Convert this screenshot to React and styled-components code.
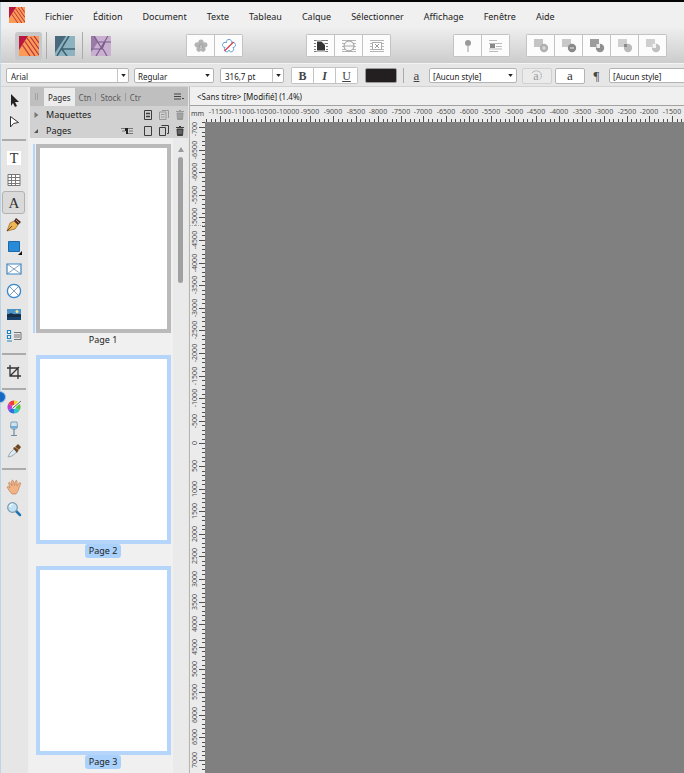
import React, { useLayoutEffect, useRef, useState } from 'react';
import styled, { createGlobalStyle } from 'styled-components';

const Global = createGlobalStyle`
  * { box-sizing: border-box; }
  html, body { margin: 0; }
  body, button, input, select {
    font-family: "Noto Sans", "Open Sans", sans-serif;
    font-size: 9px;
    color: #222;
  }
  button { padding: 0; border: 0; background: none; }
  svg { display: block; flex: none; }
`;

const Window = styled.div`
  height: 100vh;
  display: flex;
  flex-direction: column;
  overflow: hidden;
  background: #e6e6e6;
  border-top: 2px solid #050505;
`;

const MenuBar = styled.nav`
  height: 26px;
  flex: none;
  display: flex;
  align-items: center;
  gap: 20px;
  padding: 0 8px;
  background: #f0f0f0;
  border-left: 1px solid #bdd3e6;
`;

const MenuItem = styled.button`
  line-height: 16px;
  padding-top: 3px;
  white-space: nowrap;
`;

const Toolbar = styled.div`
  height: 35px;
  flex: none;
  display: flex;
  align-items: center;
  background: linear-gradient(#eeeeee, #cccccc);
  border-left: 1px solid #bdd3e6;
  padding-left: 14px;
`;

const Persona = styled.button`
  width: 27px;
  height: 28px;
  display: grid;
  place-items: center;
  border-radius: 3px;
  background: ${(p) => (p.$active ? '#c6c8c9' : 'transparent')};
`;

const Divider = styled.span`
  width: 1px;
  height: ${(p) => p.$height || 27}px;
  flex: none;
  margin: 0 4px;
  background: #aaa;
`;

const ButtonGroup = styled.div`
  display: flex;
  flex: none;
  gap: 1px;
  padding: 1px;
  background: #c3c3c3;
  border-radius: 2px;
  margin-left: ${(p) => p.$before}px;
`;

const GroupButton = styled.button`
  width: 27px;
  height: 21px;
  display: grid;
  place-items: center;
  background: #fcfcfc;
`;

const ContextBar = styled.div`
  height: 24px;
  flex: none;
  display: flex;
  align-items: center;
  padding: 1px 0 0 5px;
  background: #e6e6e6;
  border-top: 1px solid #f4f4f4;
  border-left: 1px solid #bdd3e6;
  border-bottom: 1px solid #d2d2d2;
`;

const Field = styled.span`
  width: ${(p) => p.$width}px;
  height: 15px;
  flex: none;
  display: flex;
  align-items: center;
  margin-right: ${(p) => p.$after}px;
  background: #fff;
  border: 1px solid #b4b4b4;
  border-radius: 2px;
`;

const FieldInput = styled.input`
  flex: 1;
  min-width: 0;
  height: 13px;
  padding: 1px 4px 0;
  border: 0;
  background: none;
  font-size: 8px;
  outline: none;
`;

const FieldSelect = styled.select`
  flex: 1;
  min-width: 0;
  height: 13px;
  padding: 1px 3px 0;
  border: 0;
  appearance: none;
  background: none;
  font-size: 8px;
`;

const DropButton = styled.button`
  width: 11px;
  height: 13px;
  display: grid;
  place-items: center;
  border-left: 1px solid #c4c4c4;
`;

const ArrowSlot = styled.span`
  width: 8px;
  pointer-events: none;
`;

const TextToggle = styled.button`
  width: 21px;
  height: 15px;
  background: #fff;
  font: ${(p) => p.$font} 12px/14px "Liberation Serif", serif;
  color: #444;
  text-decoration: ${(p) => (p.$underline ? 'underline' : 'none')};
`;

const ColorWell = styled.button`
  width: 32px;
  height: 15px;
  flex: none;
  margin: 0 2px 0 7px;
  background: #231f20;
  border: 1px solid #999;
  border-radius: 2px;
`;

const StyleGlyph = styled.span`
  width: 17px;
  flex: none;
  margin-right: 4px;
  text-align: center;
  font: 13px/14px "Liberation Serif", serif;
  color: #444;
  text-decoration: ${(p) => (p.$underline ? 'underline' : 'none')};
`;

const StyleButton = styled.button`
  width: 30px;
  height: 16px;
  flex: none;
  display: grid;
  place-items: center;
  margin-right: 3px;
  border: 1px solid ${(p) => (p.$off ? '#d0d0d0' : '#b4b4b4')};
  border-radius: 2px;
  background: ${(p) => (p.$off ? '#ebebeb' : '#fff')};
  color: #333;
  font: 13px/13px "Liberation Serif", serif;
`;

const Workspace = styled.div`
  flex: 1;
  min-height: 0;
  display: flex;
`;

const Tools = styled.div`
  width: 30px;
  flex: none;
  position: relative;
  display: flex;
  flex-direction: column;
  align-items: center;
  padding: 2px 3px 0 1px;
  border-left: 1px solid #bdd3e6;
  border-right: 2px solid #efefef;
`;

const ToolGroup = styled.div`
  height: ${(p) => p.$height}px;
  flex: none;
  display: grid;
  grid-auto-rows: 1fr;
`;

const Tool = styled.button`
  width: 23px;
  min-height: 0;
  display: grid;
  place-items: center;
  border-radius: 3px;
  border: 1px solid ${(p) => (p.$active ? '#b2b2b2' : 'transparent')};
  background: ${(p) => (p.$active ? '#dadada' : 'transparent')};
`;

const ToolRule = styled.hr`
  width: 24px;
  height: 2px;
  flex: none;
  margin: 6px 0;
  border: 0;
  background: #ababab;
`;

const Bubble = styled.span`
  position: absolute;
  left: -7px;
  top: 304px;
  width: 12px;
  height: 12px;
  border-radius: 50%;
  border: 1px solid #9fc3e8;
  background: #1768c4;
`;

const Panel = styled.aside`
  width: 158px;
  flex: none;
  display: flex;
  flex-direction: column;
  background: #f0f0f0;
`;

const Tabs = styled.div`
  height: 19px;
  flex: none;
  display: flex;
  align-items: center;
  background: #bfbfbf;
  padding-right: 4px;
`;

const Grip = styled.span`
  width: 3px;
  height: 7px;
  margin: 0 6px 0 5px;
  border: solid #a3a3a3;
  border-width: 0 1px;
`;

const Tab = styled.button`
  height: 18px;
  align-self: flex-end;
  padding: 0 4px;
  font-size: 8px;
  white-space: nowrap;
  color: ${(p) => (p.$active ? '#222' : '#5c5c5c')};
  background: ${(p) => (p.$active ? '#ececec' : 'transparent')};
`;

const TabSplit = styled.span`
  width: 1px;
  height: 8px;
  background: #9b9b9b;
`;

const TabGap = styled.span`
  flex: 1;
`;

const Section = styled.div`
  height: 16px;
  flex: none;
  display: flex;
  align-items: center;
  padding: 1px 3px 0;
  background: #d1d1d1;
`;

const SectionTitle = styled.button`
  flex: 1;
  display: flex;
  align-items: center;
  gap: 7px;
  line-height: 15px;
`;

const IconButton = styled.button`
  width: 16px;
  height: 15px;
  display: grid;
  place-items: center;
  margin-right: ${(p) => p.$after || 0}px;
  color: ${(p) => (p.$off ? '#999' : '#3c3c3c')};
  &:last-child { width: 10px; margin-left: 3px; }
`;

const PageScroll = styled.div`
  flex: 1;
  min-height: 0;
  display: flex;
`;

const PageList = styled.div`
  flex: 1;
  padding: 6px 0 0 3px;
  overflow: hidden;
`;

const PageItem = styled.div`
  height: 211px;
  display: flex;
  flex-direction: column;
  align-items: center;
`;

const Spread = styled.div`
  width: 100%;
  padding-left: 1px;
  border-left: 2px solid ${(p) => (p.$marked ? '#b5d5fa' : 'transparent')};
`;

const Sheet = styled.button`
  display: block;
  width: 135px;
  height: 189px;
  background: #fff;
  border: 4px solid ${(p) => (p.$selected ? '#b5d5fa' : '#bababa')};
`;

const PageName = styled.span`
  padding: 0 4px;
  border-radius: 3px;
  line-height: 14px;
  background: ${(p) => (p.$selected ? '#a9d1fb' : 'transparent')};
`;

const ScrollLane = styled.div`
  width: 15px;
  flex: none;
  display: flex;
  flex-direction: column;
  align-items: center;
  gap: 5px;
  padding-top: 9px;
  background: #eaeaea;
`;

const Thumb = styled.div`
  width: 5px;
  height: 126px;
  border-radius: 3px;
  background: #a0a0a0;
`;

const DocumentArea = styled.main`
  flex: 1;
  min-width: 0;
  display: flex;
  flex-direction: column;
  margin-left: 1px;
  border-left: 1px solid #b5b5b5;
`;

const DocumentTab = styled.div`
  height: 19px;
  flex: none;
  padding: 2px 7px 0;
  font-size: 8px;
  line-height: 16px;
  background: #f0f0f0;
  border-bottom: 1px solid #a2a2a2;
  white-space: nowrap;
`;

const CanvasGrid = styled.div`
  flex: 1;
  min-height: 0;
  display: grid;
  grid-template-columns: 15px 1fr;
  grid-template-rows: 16px 1fr;
  background: #ebebeb;
`;

const Unit = styled.span`
  padding-left: 1px;
  font-size: 7px;
  line-height: 15px;
  color: #444;
`;

const Ruler = styled.svg`
  width: 100%;
  height: 100%;
  min-width: 0;
  min-height: 0;
  overflow: hidden;
  font-size: 7px;
  fill: #505050;
`;

const Canvas = styled.div`
  background: #808080;
`;

const Caret = () => (
  <svg width="5" height="3" viewBox="0 0 6 4"><path d="M0 0h6L3 4z" fill="#222" /></svg>
);

const PublisherLogo = ({ size }) => (
  <svg width={size} height={size} viewBox="0 0 20 20">
    <rect width="20" height="20" fill="#fb9a55" />
    <path d="M0 0h9L0 14z" fill="#b9173f" />
    <path d="M3.500 9l7.500 11M6 5.500L16 20M8 2l12 17M11.500 1L20 13M15 0l5 7" stroke="#b8323f" strokeWidth="1.200" fill="none" />
  </svg>
);
const DesignerLogo = () => (
  <svg width="20" height="20" viewBox="0 0 20 20">
    <rect width="20" height="20" fill="#8cb3bf" />
    <path d="M0 0h11L0 17z" fill="#48687b" />
    <path d="M14 0L2 20M6 12l6 8M6 13h14M10 6l-3 6" stroke="#3f6273" strokeWidth="1.5" fill="none" />
  </svg>
);
const PhotoLogo = () => (
  <svg width="20" height="20" viewBox="0 0 20 20">
    <rect width="20" height="20" fill="#c9afd0" />
    <path d="M0 0h4l3 6-6 9-1 1z" fill="#9a7ba7" />
    <path d="M3 0l8 13M17 0L5 20M0 13h12M7 6h13M12 13l4 7M14 6l-3 7" stroke="#7d5d8a" strokeWidth="1.2" fill="none" />
  </svg>
);

const flower = 'M8 1.500C10 1.500 10.900 3 10.600 4.600C12.200 3.900 14.100 4.700 14.500 6.500C14.800 8.100 13.600 9.300 12 9.500C13 10.800 12.700 12.700 11.300 13.500C9.900 14.300 8.500 13.600 8 12.200C7.500 13.600 6.100 14.300 4.700 13.500C3.300 12.700 3 10.800 4 9.500C2.400 9.300 1.200 8.100 1.500 6.500C1.900 4.700 3.800 3.900 5.400 4.600C5.100 3 6 1.500 8 1.500z';
const FlowerIcon = ({ outline }) => (
  <svg width="16" height="16" viewBox="0 0 16 16">
    {outline ? (
      <>
        <path d={flower} fill="#fff" stroke="#5b9bd0" strokeWidth="1" />
        <path d="M3.500 13L12.500 4" stroke="#d9404a" strokeWidth="1.200" />
      </>
    ) : (
      <>
        <path d={flower} fill="#b3b3b3" />
        <circle cx="8" cy="8" r="2" fill="#a0a0a0" />
        <path d="M8 7v4" stroke="#ddd" strokeWidth="1" />
      </>
    )}
  </svg>
);
const WrapIcon = ({ kind }) => (
  <svg width="16" height="14" viewBox="0 0 16 14">
    <path d="M1 1.500h14M1 4.500h14M1 7.500h14M1 10.500h14M1 12.500h14" stroke={kind === 'tight' ? '#777' : '#b5b5b5'} strokeWidth="1" />
    {kind === 'tight' && <path d="M3.500 2h5l4 4v6h-9z" fill="#333" stroke="#fff" />}
    {kind === 'round' && <><circle cx="8" cy="7" r="5" fill="#f8f8f8" stroke="#999" /><path d="M3 7h10" stroke="#aaa" /></>}
    {kind === 'box' && <><path d="M3.500 3.500h9v7h-9z" fill="#fff" stroke="#aaa" /><path d="M6 5l4 4m0-4L6 9" stroke="#999" /></>}
  </svg>
);
const PinIcon = () => (
  <svg width="10" height="14" viewBox="0 0 10 14"><circle cx="5" cy="4" r="3" fill="#999" /><path d="M5 6v7" stroke="#aaa" strokeWidth="1.200" /></svg>
);
const InlineIcon = () => (
  <svg width="14" height="12" viewBox="0 0 14 12"><path d="M0 .5h8M0 3.500h13M7 6.500h6M0 9h13M0 11.500h9" stroke="#bbb" /><path d="M1 4h5v4H1z" fill="#888" /></svg>
);
const BoolIcon = ({ a, b, mark }) => (
  <svg width="16" height="15" viewBox="0 0 16 15">
    <path d="M1 1h9v8H1z" fill={a} />
    <circle cx="11" cy="10" r="4.200" fill={b} />
    {mark === 'plus' && <path d="M9 10h4M11 8v4" stroke="#e4e4e4" />}
    {mark === 'minus' && <path d="M9 10h4" stroke="#eee" />}
    {mark === 'cut' && <path d="M7.500 6h3.500v4H7.500z" fill="#fff" opacity=".8" />}
    {mark === 'mid' && <path d="M7 6h3v3H7z" fill="#8b8b8b" />}
  </svg>
);
const AutoStyleIcon = () => (
  <svg width="14" height="14" viewBox="0 0 14 14">
    <text x="6" y="11" textAnchor="middle" fontFamily="Liberation Serif" fontSize="12" fill="#999">a</text>
    <path d="M2 4C4 1 9 1 11 4.500c1 3 0 5-1.500 6" fill="none" stroke="#b5b5b5" />
  </svg>
);

const TrashIcon = () => (
  <svg width="8" height="10" viewBox="0 0 8 10"><path d="M0 1.500h8M3 .5h2M1 3h6l-.5 6.500h-5z" fill="currentColor" stroke="currentColor" /><path d="M3 4v4M5 4v4" stroke="#bbb" strokeWidth=".6" /></svg>
);
const MasterIcon = ({ stacked }) => (
  <svg width="10" height="10" viewBox="0 0 10 10" fill="none" stroke="currentColor">
    {stacked && <path d="M3 .5h6.500v7.500" />}
    <path d={stacked ? 'M.5 2h6.500v7.500H.5z' : 'M1.500 .5h7v9h-7z'} />
    <path d={stacked ? 'M2 4.500h3.500M2 7h3.500' : 'M3 3.500h4M3 6.500h4'} strokeWidth={stacked ? 1 : 1.500} />
  </svg>
);
const SheetIcon = ({ stacked }) => (
  <svg width="10" height="11" viewBox="0 0 10 11" fill="none" stroke="currentColor">
    {stacked ? <path d="M.5 2.500h6v8h-6zM2.500 .5h7v8H8" /> : <path d="M1.500 1.500h7v9h-7z" />}
  </svg>
);
const SpreadIcon = () => (
  <svg width="12" height="8" viewBox="0 0 12 8"><path d="M0 1.500h5M1 4h3M7 1.500h5M8 4h4M7 6.500h5" stroke="#777" /><path d="M4 1h3v6H5V4H4z" fill="#222" /></svg>
);

const toolIcons = {
  move: <path d="M5 2l8 8H9l2 4-2 1-2-4-2 3z" fill="#222" />,
  node: <path d="M4.500 2.500l8 6-5 1-3 3.500z" fill="#fff" stroke="#333" />,
  frame: <><path d="M1 1h14v14H1z" fill="#fff" /><text x="8" y="13" textAnchor="middle" fontFamily="Liberation Serif" fontSize="14" fill="#333">T</text></>,
  table: <><path d="M2 2.500h12v11H2z" fill="#fff" stroke="#777" /><path d="M2 5.500h12M2 8.500h12M2 11.500h12M5.500 2v12M9.500 2v12" stroke="#777" /></>,
  artistic: <text x="8" y="13" textAnchor="middle" fontFamily="Liberation Serif" fontSize="15" fill="#333">A</text>,
  pen: <><path d="M1 14L4 6l4-2 4 4-3 4z" fill="#eeb552" stroke="#8f6126" strokeWidth=".7" /><path d="M1 14l5-5" stroke="#62401d" /><path d="M8 4l2-3 5 4-3 3z" fill="#4a2d22" /><path d="M10 3l3 3" stroke="#cc855b" /></>,
  rect: <><path d="M2.500 2.500h11v10h-11z" fill="#278bd8" stroke="#1c6aaa" /><path d="M16 12v4h-4z" fill="#111" /></>,
  picture: <><path d="M1 3h14v10H1z" fill="#fff" stroke="#3b86c4" strokeWidth="1.200" /><path d="M1 3l14 10M15 3L1 13" stroke="#6788aa" strokeWidth=".8" /></>,
  ellipse: <><circle cx="8" cy="8" r="6.600" fill="#fff" stroke="#3487cc" strokeWidth="1.300" /><path d="M3.500 3.500l9 9m0-9l-9 9" stroke="#6788aa" strokeWidth=".8" /></>,
  place: <><path d="M1 3h14v11H1z" fill="#16426c" /><path d="M1 3h14v5H1z" fill="#4b93c6" /><circle cx="11" cy="5.500" r="1.500" fill="#f7e3a0" /><path d="M1 9l4-2 4 2 3-1 3 1v2H1z" fill="#182d43" /></>,
  merge: <><path d="M1.500 2.500h3v3h-3zM1.500 7.500h3v3h-3zM1 13h5" fill="#fff" stroke="#2383bd" strokeWidth="1.200" /><path d="M8 4.500h7v7H8M8 7h6M8 9h6" fill="none" stroke="#777" /></>,
  crop: <path d="M4 1v11h11M1 4h11v11M4 12l9-9" fill="none" stroke="#333" strokeWidth="1.300" />,
  fill: <><path d="M8 8V1.500a6.500 6.500 0 0 1 5.600 3.200z" fill="#f2cf2c" /><path d="M8 8l5.600-3.300a6.500 6.500 0 0 1 0 6.500z" fill="#52c443" /><path d="M8 8l5.600 3.200A6.500 6.500 0 0 1 8 14.500z" fill="#2ec4ca" /><path d="M8 8v6.500a6.500 6.500 0 0 1-5.600-3.200z" fill="#346be0" /><path d="M8 8l-5.600 3.300a6.500 6.500 0 0 1 0-6.600z" fill="#c13bd0" /><path d="M8 8L2.400 4.700A6.500 6.500 0 0 1 8 1.500z" fill="#ee3c42" /><circle cx="8" cy="8" r="2" fill="#f4f4f4" /><path d="M7 9l8-7" stroke="#eee" strokeWidth="2.500" /><path d="M7 9l8-7" stroke="#666" /></>,
  glass: <><path d="M5 1h6l.5 5c0 3-7 3-7 0z" fill="#cce3f2" stroke="#718ba1" strokeWidth=".8" /><path d="M5 5h6v2L8 8 5 7z" fill="#72add6" /><path d="M8 8v6M5 14.500h6" stroke="#718ba1" strokeWidth="1.200" /></>,
  dropper: <><path d="M2 14l2-4 4-4 3 3-5 4z" fill="#ddeaf2" stroke="#83919c" strokeWidth=".7" /><path d="M7 5l2-1 3-3 3 3-3 4-1 2z" fill="#6b4626" /><path d="M9 4l4 3" stroke="#c69a55" /></>,
  hand: <path d="M6 15C4 13 2 10 1 8c1-1 2 0 3 1L2.500 4c.5-1 1.500-1 2 0L6 7 5.500 2c.5-1 1.500-1 2 0L8.500 6.500 9.500 2c.5-1 1.700-.5 1.600.5L11 7l2-3c1-1 2 0 1.500 1L12 12l-2 3z" fill="#f1b384" stroke="#b87a50" strokeWidth=".6" />,
  zoom: <><path d="M10 10l4 4" stroke="#2374b1" strokeWidth="2.500" strokeLinecap="round" /><circle cx="6.500" cy="6.500" r="4.800" fill="#c1e2f5" stroke="#7a9bb3" strokeWidth="1.200" /><path d="M4 6c0-2 2-3 3-3" stroke="#fff" strokeWidth="1.200" fill="none" /></>,
};

const toolGroups = [
  { height: 44, items: [['move', 'Déplacement'], ['node', 'Nœud']] },
  { height: 200, items: [['frame', 'Cadre de texte'], ['table', 'Tableau'], ['artistic', 'Texte artistique'], ['pen', 'Plume'], ['rect', 'Rectangle'], ['picture', 'Cadre image'], ['ellipse', 'Cadre ellipse'], ['place', 'Placer image'], ['merge', 'Fusion de données']] },
  { height: 21, items: [['crop', 'Rogner']] },
  { height: 66, items: [['fill', 'Remplissage'], ['glass', 'Transparence'], ['dropper', 'Pipette']] },
  { height: 44, items: [['hand', 'Panorama'], ['zoom', 'Zoom']] },
];

const menus = ['Fichier', 'Édition', 'Document', 'Texte', 'Tableau', 'Calque', 'Sélectionner', 'Affichage', 'Fenêtre', 'Aide'];

const STEP = 22.6;
const SUBDIVISIONS = 5;
const LABEL_HALF = 12;

// Draws one ruler; `origin` is where the first labelled value lies along it.
function Scale({ vertical, start, origin }) {
  const ref = useRef(null);
  const [length, setLength] = useState(0);

  useLayoutEffect(() => {
    const measure = () => {
      const box = ref.current.getBoundingClientRect();
      setLength(vertical ? box.height : box.width);
    };
    measure();
    window.addEventListener('resize', measure);
    return () => window.removeEventListener('resize', measure);
  }, [vertical]);

  const marks = [];
  for (let i = -SUBDIVISIONS; origin + (i * STEP) / SUBDIVISIONS < length; i += 1) {
    const at = Math.round(origin + (i * STEP) / SUBDIVISIONS);
    const major = i % SUBDIVISIONS === 0;
    const size = major ? 6 : 3;
    marks.push(vertical
      ? <rect key={i} x={15 - size} y={at} width={size} height="1" />
      : <rect key={i} x={at} y={16 - size} width="1" height={size} />);
    if (major && i >= 0 && at + LABEL_HALF <= length) {
      const value = start + (i / SUBDIVISIONS) * 500;
      marks.push(vertical
        ? <text key={`t${i}`} transform={`translate(7 ${at}) rotate(-90)`} textAnchor="middle">{value}</text>
        : <text key={`t${i}`} x={at} y="8" textAnchor="middle">{value}</text>);
    }
  }
  return (
    <Ruler ref={ref} aria-hidden="true">
      {vertical && <path d="M0 103.500h15" stroke="#aaa" strokeDasharray="1 1" />}
      {marks}
    </Ruler>
  );
}

function StyleSelect({ label, width, after, options }) {
  return (
    <Field $width={width} $after={after}>
      <FieldSelect aria-label={label}>{options.map((o) => <option key={o}>{o}</option>)}</FieldSelect>
      <ArrowSlot><Caret /></ArrowSlot>
    </Field>
  );
}

function Combo({ label, width, after, value }) {
  return (
    <Field $width={width} $after={after}>
      <FieldInput aria-label={label} defaultValue={value} />
      <DropButton aria-label={`${label} : liste`}><Caret /></DropButton>
    </Field>
  );
}

export default function App() {
  return (
    <>
      <Global />
      <Window>
        <MenuBar>
          <PublisherLogo size={16} />
          {menus.map((m) => <MenuItem key={m}>{m}</MenuItem>)}
        </MenuBar>

        <Toolbar>
          <Persona $active aria-label="Publisher"><PublisherLogo size={20} /></Persona>
          <Divider />
          <Persona aria-label="Designer"><DesignerLogo /></Persona>
          <Divider />
          <Persona aria-label="Photo"><PhotoLogo /></Persona>
          <ButtonGroup $before={72}>
            <GroupButton aria-label="Paramètres par défaut"><FlowerIcon /></GroupButton>
            <GroupButton aria-label="Rétablir"><FlowerIcon outline /></GroupButton>
          </ButtonGroup>
          <ButtonGroup $before={63}>
            <GroupButton aria-label="Habillage"><WrapIcon kind="tight" /></GroupButton>
            <GroupButton aria-label="Habillage rond"><WrapIcon kind="round" /></GroupButton>
            <GroupButton aria-label="Habillage carré"><WrapIcon kind="box" /></GroupButton>
          </ButtonGroup>
          <ButtonGroup $before={62}>
            <GroupButton aria-label="Épingler"><PinIcon /></GroupButton>
            <GroupButton aria-label="Épingler en ligne"><InlineIcon /></GroupButton>
          </ButtonGroup>
          <ButtonGroup $before={16}>
            <GroupButton aria-label="Ajouter"><BoolIcon a="#c4c4c4" b="#b0b0b0" mark="plus" /></GroupButton>
            <GroupButton aria-label="Soustraire"><BoolIcon a="#c8c8c8" b="#898989" mark="minus" /></GroupButton>
            <GroupButton aria-label="Intersection"><BoolIcon a="#9c9c9c" b="#8f8f8f" mark="cut" /></GroupButton>
            <GroupButton aria-label="Exclure"><BoolIcon a="#cfcfcf" b="#bbb" mark="mid" /></GroupButton>
            <GroupButton aria-label="Diviser"><BoolIcon a="#cfcfcf" b="#c0c0c0" mark="cut" /></GroupButton>
          </ButtonGroup>
        </Toolbar>

        <ContextBar>
          <Combo label="Police" width={123} after={5} value="Arial" />
          <StyleSelect label="Graisse" width={80} after={6} options={['Regular', 'Bold']} />
          <Combo label="Taille" width={64} after={7} value="316,7 pt" />
          <ButtonGroup $before={0}>
            <TextToggle $font="bold">B</TextToggle>
            <TextToggle $font="italic bold">I</TextToggle>
            <TextToggle $font="normal" $underline>U</TextToggle>
          </ButtonGroup>
          <ColorWell aria-label="Couleur" />
          <Divider $height={15} />
          <StyleGlyph $underline>a</StyleGlyph>
          <StyleSelect label="Style de caractère" width={88} after={5} options={['[Aucun style]']} />
          <StyleButton $off aria-label="Style automatique"><AutoStyleIcon /></StyleButton>
          <StyleButton>a</StyleButton>
          <StyleGlyph>¶</StyleGlyph>
          <StyleSelect label="Style de paragraphe" width={88} after={0} options={['[Aucun style]']} />
        </ContextBar>

        <Workspace>
          <Tools>
            {toolGroups.map((group, g) => (
              <React.Fragment key={group.items[0][0]}>
                {g > 0 && <ToolRule />}
                <ToolGroup $height={group.height}>
                  {group.items.map(([id, label]) => (
                    <Tool key={id} aria-label={label} $active={id === 'artistic'}>
                      <svg width="16" height="16" viewBox="0 0 16 16">{toolIcons[id]}</svg>
                    </Tool>
                  ))}
                </ToolGroup>
              </React.Fragment>
            ))}
            <Bubble />
          </Tools>

          <Panel>
            <Tabs>
              <Grip />
              <Tab $active>Pages</Tab>
              <Tab>Ctn</Tab>
              <TabSplit />
              <Tab>Stock</Tab>
              <TabSplit />
              <Tab>Ctr</Tab>
              <TabGap />
              <svg width="10" height="7" viewBox="0 0 10 7"><path d="M0 1h7M0 3.500h7M0 6h7" stroke="#444" /><path d="M8 5h2v1H8z" fill="#444" /></svg>
            </Tabs>
            <Section>
              <SectionTitle>
                <svg width="6" height="6" viewBox="0 0 6 6"><path d="M1.500 0L5.500 3l-4 3z" fill="#777" /></svg>
                Maquettes
              </SectionTitle>
              <IconButton aria-label="Ajouter une maquette"><MasterIcon /></IconButton>
              <IconButton $off aria-label="Dupliquer la maquette"><MasterIcon stacked /></IconButton>
              <IconButton $off aria-label="Supprimer la maquette"><TrashIcon /></IconButton>
            </Section>
            <Section>
              <SectionTitle>
                <svg width="6" height="6" viewBox="0 0 6 6"><path d="M5 1v4H1z" fill="#555" /></svg>
                Pages
              </SectionTitle>
              <IconButton $after={5} aria-label="Planche"><SpreadIcon /></IconButton>
              <IconButton aria-label="Ajouter une page"><SheetIcon /></IconButton>
              <IconButton aria-label="Dupliquer la page"><SheetIcon stacked /></IconButton>
              <IconButton aria-label="Supprimer la page"><TrashIcon /></IconButton>
            </Section>
            <PageScroll>
              <PageList>
                {[1, 2, 3].map((n) => (
                  <PageItem key={n}>
                    <Spread $marked={n === 1}>
                      <Sheet $selected={n > 1} aria-labelledby={`page-${n}`} />
                    </Spread>
                    <PageName id={`page-${n}`} $selected={n > 1}>Page {n}</PageName>
                  </PageItem>
                ))}
              </PageList>
              <ScrollLane>
                <svg width="6" height="5" viewBox="0 0 6 5"><path d="M3 0l3 5H0z" fill="#999" /></svg>
                <Thumb />
              </ScrollLane>
            </PageScroll>
          </Panel>

          <DocumentArea>
            <DocumentTab>&lt;Sans titre&gt; [Modifié] (1.4%)</DocumentTab>
            <CanvasGrid>
              <Unit>mm</Unit>
              <Scale start={-11500} origin={15} />
              <Scale vertical start={-7000} origin={5} />
              <Canvas />
            </CanvasGrid>
          </DocumentArea>
        </Workspace>
      </Window>
    </>
  );
}
